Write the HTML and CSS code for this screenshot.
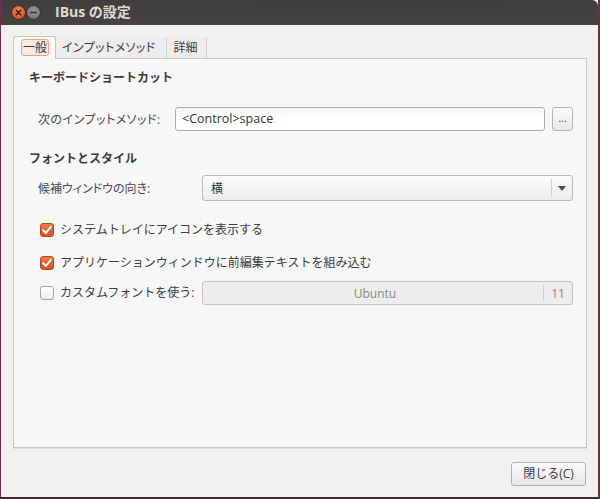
FILE: index.html
```html
<!DOCTYPE html>
<html lang="ja">
<head>
<meta charset="utf-8">
<title>IBus の設定</title>
<link rel="stylesheet" href="styles.css">
</head>
<body>
<div class="window">
  <div class="titlebar">
    <span class="wbtn close"><svg width="13" height="13" viewBox="0 0 13 13"><path d="M4.3 4.3 L8.7 8.7 M8.7 4.3 L4.3 8.7" stroke="#3b1b0e" stroke-width="1.6" stroke-linecap="round"/></svg></span>
    <span class="wbtn mini"><svg width="13" height="13" viewBox="0 0 13 13"><path d="M3.8 6.5 H9.2" stroke="#2e2d2a" stroke-width="1.6" stroke-linecap="round"/></svg></span>
    <span class="title">IBus の設定</span>
  </div>
  <div class="content">
    <div class="tabs">
      <div class="tab active"><span class="focus">一般</span></div>
      <div class="tab tab-im prop">インプットメソッド</div>
      <div class="tab tab-adv">詳細</div>
    </div>
    <div class="panel">
      <div class="header h1">キーボードショートカット</div>
      <div class="row row-entry">
        <span class="label lbl1 prop">次のインプットメソッド:</span>
        <div class="entry">&lt;Control&gt;space</div>
        <div class="smallbtn">...</div>
      </div>
      <div class="header h2">フォントとスタイル</div>
      <div class="row row-combo">
        <span class="label lbl2 prop">候補ウィンドウの向き:</span>
        <div class="combo"><span class="combo-text">横</span><span class="combo-sep"></span><span class="arrow"></span></div>
      </div>
      <div class="check-row c1">
        <span class="cb on"><svg width="14" height="14" viewBox="0 0 14 14"><path d="M3.2 7.2 L5.9 10 L10.8 3.8" fill="none" stroke="#fff" stroke-width="2" stroke-linecap="round" stroke-linejoin="round"/></svg></span>
        <span class="ctext">システムトレイにアイコンを表示する</span>
      </div>
      <div class="check-row c2">
        <span class="cb on"><svg width="14" height="14" viewBox="0 0 14 14"><path d="M3.2 7.2 L5.9 10 L10.8 3.8" fill="none" stroke="#fff" stroke-width="2" stroke-linecap="round" stroke-linejoin="round"/></svg></span>
        <span class="ctext">アプリケーションウィンドウに前編集テキストを組み込む</span>
      </div>
      <div class="check-row c3">
        <span class="cb off"></span>
        <span class="ctext lbl3">カスタムフォントを使う:</span>
        <div class="fontbtn"><span class="fname">Ubuntu</span><span class="fsep"></span><span class="fsize">11</span></div>
      </div>
    </div>
    <div class="footer">
      <div class="btn">閉じる(C)</div>
    </div>
  </div>
</div>
</body>
</html>
```
FILE: styles.css
```css
html, body {
  margin: 0;
  padding: 0;
  background: #3a2b26;
}
body {
  width: 600px;
  height: 499px;
  overflow: hidden;
  font-family: "Open Sans", "Noto Sans CJK JP", sans-serif;
  font-size: 12px;
  color: #3c3c3c;
}
.window {
  width: 597px;
  height: 497px;
  border-left: 1px solid #6d2f55;
  border-right: 2px solid #5e3b2d;
  border-bottom: 2px solid #3e2c2a;
  display: flex;
  flex-direction: column;
  background: #f2f1f0;
}
.titlebar {
  height: 25px;
  flex: none;
  background: linear-gradient(#3f3e3a, #45443f);
  border-top-right-radius: 6px;
  display: flex;
  align-items: center;
  padding-left: 11px;
  box-sizing: border-box;
}
.wbtn {
  width: 13px;
  height: 13px;
  border-radius: 50%;
  display: flex;
  margin-right: 2px;
}
.wbtn.close {
  background: radial-gradient(circle at 50% 35%, #f68b5a, #e2541f 70%, #b9401a);
  box-shadow: 0 0 0 0.5px #2c2420;
}
.wbtn.mini {
  background: radial-gradient(circle at 50% 35%, #9a9994, #7b7a75 70%, #5f5e5a);
  box-shadow: 0 0 0 0.5px #2c2a26;
}
.title {
  margin-left: 13px;
  font-size: 14px;
  font-weight: bold;
  color: #dfdbd2;
  line-height: 16px;
  margin-top: -1px;
}
.prop {
  font-feature-settings: "palt" 1;
}
.content {
  flex: 1;
  display: flex;
  flex-direction: column;
  padding: 11px 11px 12px 12px;
}
.tabs {
  display: flex;
  height: 22px;
  align-items: flex-end;
  position: relative;
  z-index: 1;
}
.tab {
  height: 21px;
  line-height: 21px;
  padding: 0 7px 0 6px;
  border-right: 1px solid #d5d2ce;
  background: #eeedeb;
  color: #3c3c3c;
}
.tab-im {
  letter-spacing: 0.4px;
  padding: 0 10px 0 6px;
}
.tab-adv {
  padding: 0 8px 0 7px;
}
.tab.active {
  height: 23px;
  margin-bottom: -1px;
  background: #f7f7f7;
  border: 1px solid #c8c5c1;
  border-bottom: none;
  border-radius: 3px 3px 0 0;
  box-sizing: border-box;
  padding: 2px 6px 0 7px;
  line-height: 17px;
}
.focus {
  display: inline-block;
  border: 1px solid #f0a27f;
  border-radius: 3px;
  background: #fde9df;
  padding: 0 1px;
  line-height: 15px;
}
.panel {
  height: 390px;
  box-sizing: border-box;
  background: #f7f7f7;
  border: 1px solid #c8c5c1;
  box-shadow: 0 1px 0 #e2e0dd;
  padding: 10px 13px 0 15px;
  display: flex;
  flex-direction: column;
}
.header {
  font-weight: bold;
  line-height: 17px;
}
.h2 { margin-top: 19px; }
.row {
  display: flex;
  align-items: center;
  padding-left: 9px;
}
.row-entry { margin-top: 21px; }
.row-combo { margin-top: 8px; }
.label { color: #4a4a4a; }
.lbl1 { width: 137px; flex: none; letter-spacing: 0.5px; }
.lbl2 { width: 164px; flex: none; }
.entry {
  flex: 1;
  height: 24px;
  box-sizing: border-box;
  border: 1px solid #aeaaa5;
  border-radius: 3px;
  background: linear-gradient(#f4f4f4, #ffffff 40%);
  padding-left: 6px;
  line-height: 22px;
  color: #333;
  font-size: 12.5px;
}
.smallbtn {
  width: 21px;
  height: 24px;
  margin-left: 7px;
  box-sizing: border-box;
  border: 1px solid #b9b6b1;
  border-radius: 3px;
  background: linear-gradient(#fbfbfb, #e9e8e6);
  text-align: center;
  line-height: 20px;
  font-size: 11px;
  color: #3f4f6a;
}
.combo {
  flex: 1;
  height: 26px;
  box-sizing: border-box;
  border: 1px solid #bdbab5;
  border-radius: 3px;
  background: linear-gradient(#fbfbfb, #ececeb);
  display: flex;
  align-items: center;
  padding-left: 8px;
}
.combo-text { flex: 1; color: #333; }
.combo-sep {
  width: 1px;
  height: 18px;
  background: #d4d1cd;
  margin-right: 6px;
}
.arrow {
  width: 0;
  height: 0;
  border-left: 4px solid transparent;
  border-right: 4px solid transparent;
  border-top: 5px solid #4c4c4c;
  margin-right: 6px;
}
.check-row {
  display: flex;
  align-items: center;
  padding-left: 11px;
}
.c1 { margin-top: 21px; }
.c2 { margin-top: 17px; }
.c3 { margin-top: 10px; }
.cb {
  width: 14px;
  height: 14px;
  box-sizing: border-box;
  border-radius: 3px;
  flex: none;
  display: flex;
}
.cb.on {
  background: linear-gradient(#ec7a47, #d4511d);
  border: 1px solid #b5461c;
}
.cb.on svg { margin: -1px; }
.cb.off {
  background: linear-gradient(#ffffff, #f0efee);
  border: 1px solid #a9a6a2;
}
.ctext {
  margin-left: 6px;
  line-height: 16px;
  color: #3c3c3c;
}
.lbl3 { width: 142px; flex: none; }
.fontbtn {
  flex: 1;
  height: 24px;
  box-sizing: border-box;
  border: 1px solid #c6c3bf;
  border-radius: 3px;
  background: #ededec;
  display: flex;
  align-items: center;
  color: #8a8782;
}
.fname { flex: 1; text-align: center; padding-left: 4px; }
.fsep {
  width: 1px;
  height: 16px;
  background: #d2cfcb;
}
.fsize { width: 28px; text-align: center; }
.footer {
  display: flex;
  justify-content: flex-end;
  margin-top: 14px;
}
.btn {
  width: 75px;
  height: 24px;
  box-sizing: border-box;
  border: 1px solid #b6b3ae;
  border-radius: 3px;
  background: linear-gradient(#fbfbfb, #e8e7e5);
  text-align: center;
  line-height: 22px;
  color: #3c3c3c;
  margin-right: 1px;
}
```
